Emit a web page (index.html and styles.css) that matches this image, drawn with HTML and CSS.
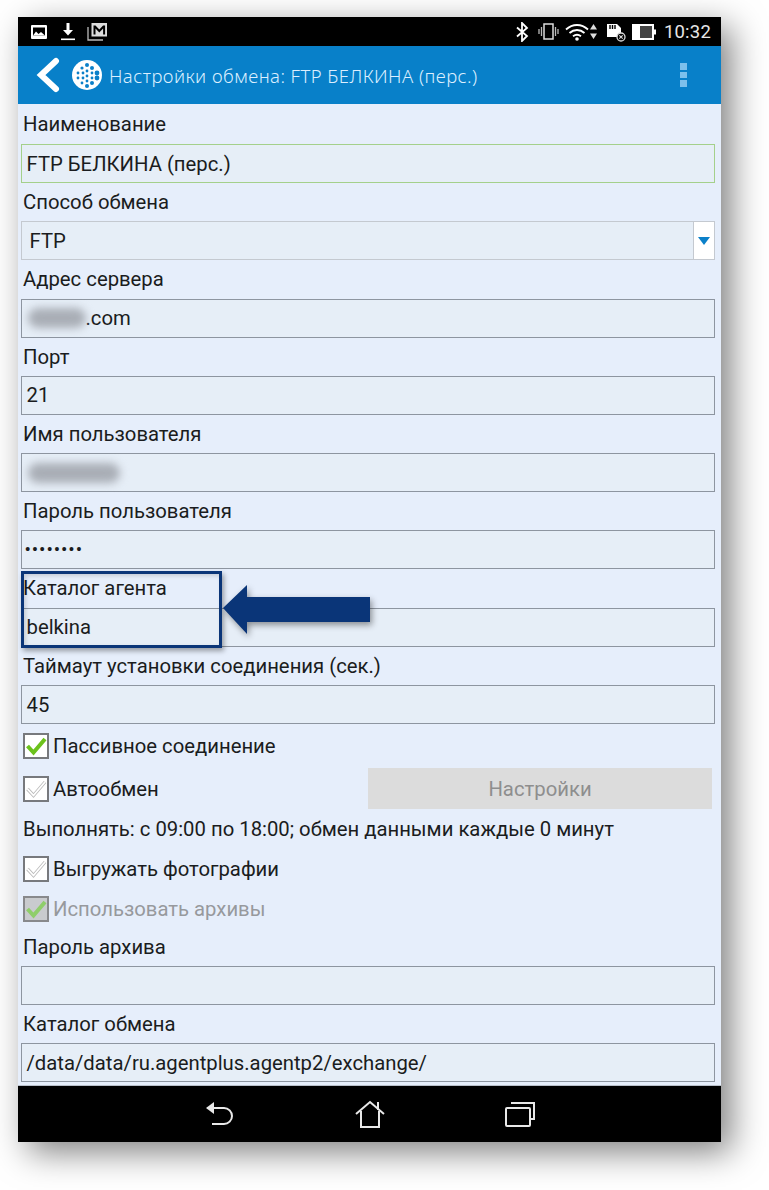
FILE: index.html
```html
<!DOCTYPE html>
<html lang="ru">
<head>
<meta charset="utf-8">
<title>Настройки обмена</title>
<link rel="stylesheet" href="styles.css">
</head>
<body>
<div class="screen">
  <div class="status">
    <div class="status-left">
      <svg class="ic" width="18" height="16" viewBox="0 0 18 16"><rect x="1" y="1" width="16" height="14" rx="1" fill="#fff"/><rect x="3" y="3.500" width="12" height="8" fill="#000"/><path d="M3 11.500 6 7.500 8.500 10 11 8l4 3.500z" fill="#fff"/></svg>
      <svg class="ic" width="14" height="19" viewBox="0 0 14 19"><path d="M5.500 1h3v7h3.500L7 13.500 2 8h3.500z" fill="#fff"/><rect y="16.500" width="14" height="1.600" fill="#fff"/></svg>
      <svg class="ic" width="21" height="19" viewBox="0 0 21 19"><path d="M1 5v13h15" fill="none" stroke="#bbb" stroke-width="1.300"/><rect x="4.500" y="1" width="15.500" height="13.500" fill="#ddd"/><path d="M6.500 12.500V3.500h2l3.800 4 3.800-4h2v9h-2V6.500l-3.800 4-3.800-4v6z" fill="#000"/></svg>
    </div>
    <div class="status-right">
      <svg class="ic bt" width="13" height="20" viewBox="0 0 13 20"><path d="M1 5.500 11 14l-5 5V1l5 5L1 14.500" fill="none" stroke="#fff" stroke-width="1.800"/></svg>
      <svg class="ic vib" width="21" height="17" viewBox="0 0 21 17"><rect x="6" y="1" width="9" height="15" fill="none" stroke="#ddd" stroke-width="1.500"/><path d="M1 6v5M3.500 4v9M17.500 4v9M20 6v5" stroke="#bbb" stroke-width="1.300"/></svg>
      <svg class="ic wifi" width="24" height="18" viewBox="0 0 24 18"><path d="M1 6.500C7.500.5 16.500.5 23 6.500M4.500 10c4.500-4 10.500-4 15 0M8 13.300c2.500-2 5.500-2 8 0" fill="none" stroke="#fff" stroke-width="1.800"/><circle cx="12" cy="16" r="1.800" fill="#fff"/></svg>
      <svg class="ic arrows" width="7" height="15" viewBox="0 0 7 15"><path d="M3.500 0 7 5.500H0zM0 9.500h7L3.500 15z" fill="#ddd"/></svg>
      <svg class="ic sd" width="20" height="20" viewBox="0 0 20 20"><path d="M1 1h10l4 4v9H1z" fill="#fff" transform="translate(0 1)"/><path d="M4 3v4M6.500 3v4M9 3v4" stroke="#000" stroke-width="1.400"/><circle cx="15" cy="15" r="4" fill="#000" stroke="#ddd" stroke-width="1.300"/><path d="m13.300 13.300 3.400 3.400m0-3.400-3.400 3.400" stroke="#ddd" stroke-width="1.100"/></svg>
      <svg class="ic batt" width="24" height="16" viewBox="0 0 24 16"><rect x="1" y="1" width="20" height="14" fill="#444" stroke="#fff" stroke-width="2"/><rect x="1" y="1" width="7" height="14" fill="#fff"/><rect x="21.500" y="5.500" width="2.500" height="5" fill="#fff"/></svg>
      <span class="clock">10:32</span>
    </div>
  </div>

  <header class="appbar">
    <svg class="back" width="24" height="36" viewBox="0 0 24 36"><path d="M20 4 5 18l15 14" fill="none" stroke="#fff" stroke-width="6" stroke-linecap="round"/></svg>
    <svg class="logo" width="30" height="30" viewBox="0 0 30 30"><circle cx="15" cy="15" r="15" fill="#fff"/><g fill="#0b80c9"><circle cx="15" cy="5" r="2"/><circle cx="10" cy="8" r="1.600"/><circle cx="20" cy="8" r="2"/><circle cx="6" cy="13" r="1.400"/><circle cx="11" cy="13" r="1.400"/><circle cx="15" cy="11" r="1.400"/><circle cx="20" cy="13" r="1.400"/><circle cx="25" cy="13" r="2.400"/><circle cx="6" cy="18" r="1.400"/><circle cx="11" cy="18" r="1.400"/><circle cx="15" cy="16" r="1.400"/><circle cx="20" cy="18" r="1.400"/><circle cx="25" cy="18" r="2.400"/><circle cx="10" cy="23" r="1.400"/><circle cx="15" cy="21" r="1.400"/><circle cx="15" cy="26" r="2"/><circle cx="20" cy="23" r="2"/></g></svg>
    <h1 class="title">Настройки обмена: FTP БЕЛКИНА (перс.)</h1>
    <div class="menu"><i></i><i></i><i></i></div>
  </header>

  <main class="form">
    <label class="lbl first">Наименование</label>
    <div class="field focus">FTP БЕЛКИНА (перс.)</div>
    <label class="lbl">Способ обмена</label>
    <div class="field select"><span class="select-val">FTP</span><span class="select-btn"><svg width="12" height="8" viewBox="0 0 12 8"><path d="M0 0h12L6 8z" fill="#0b80c9"/></svg></span></div>
    <label class="lbl">Адрес сервера</label>
    <div class="field"><span class="smudge s1"></span>.com</div>
    <label class="lbl">Порт</label>
    <div class="field">21</div>
    <label class="lbl">Имя пользователя</label>
    <div class="field"><span class="smudge s2"></span></div>
    <label class="lbl">Пароль пользователя</label>
    <div class="field dots">••••••••</div>
    <label class="lbl">Каталог агента</label>
    <div class="field">belkina</div>
    <label class="lbl">Таймаут установки соединения (сек.)</label>
    <div class="field">45</div>

    <div class="check-row r1">
      <span class="box"><svg width="22" height="22" viewBox="0 0 22 22"><path d="m2.500 11 6 6.500L20 4" fill="none" stroke="#6cc21c" stroke-width="4"/></svg></span>
      <span>Пассивное соединение</span>
    </div>
    <div class="check-row r2">
      <span class="box"><svg width="22" height="22" viewBox="0 0 22 22"><path d="m2.500 11 6 6.500L20 4" fill="none" stroke="#bbb" stroke-width="3.400"/><path d="m2.500 11 6 6.500L20 4" fill="none" stroke="#fff" stroke-width="1.800"/></svg></span>
      <span>Автообмен</span>
      <button class="btn">Настройки</button>
    </div>
    <p class="note">Выполнять: с 09:00 по 18:00; обмен данными каждые 0 минут</p>
    <div class="check-row r4">
      <span class="box"><svg width="22" height="22" viewBox="0 0 22 22"><path d="m2.500 11 6 6.500L20 4" fill="none" stroke="#bbb" stroke-width="3.400"/><path d="m2.500 11 6 6.500L20 4" fill="none" stroke="#fff" stroke-width="1.800"/></svg></span>
      <span>Выгружать фотографии</span>
    </div>
    <div class="check-row r5 off">
      <span class="box"><svg width="22" height="22" viewBox="0 0 22 22"><path d="m2.500 11 6 6.500L20 4" fill="none" stroke="#8fce6a" stroke-width="4"/></svg></span>
      <span>Использовать архивы</span>
    </div>
    <label class="lbl l-arch">Пароль архива</label>
    <div class="field"></div>
    <label class="lbl">Каталог обмена</label>
    <div class="field">/data/data/ru.agentplus.agentp2/exchange/</div>
  </main>

  <nav class="navbar">
    <svg width="30" height="28" viewBox="0 0 30 28"><path d="M2 8h17a7.500 7.500 0 0 1 0 16H7" fill="none" stroke="#e8e8e8" stroke-width="2"/><path d="M1 8l8-6v12z" fill="#e8e8e8"/></svg>
    <svg width="30" height="28" viewBox="0 0 30 28"><path d="M1 14 15 2l14 12M6 11v16h18V11M23 2v8" fill="none" stroke="#e8e8e8" stroke-width="2"/></svg>
    <svg width="30" height="26" viewBox="0 0 30 26"><rect x="1" y="7" width="24" height="18" rx="1" fill="none" stroke="#e8e8e8" stroke-width="2"/><path d="M6 2h23v16h-4" fill="none" stroke="#e8e8e8" stroke-width="2"/></svg>
  </nav>

  <div class="mark"></div>
  <svg class="arrow" width="165" height="64" viewBox="0 0 165 64"><path d="M4 27 28 4v12h123v25H28v12z" fill="#0a3578"/></svg>
</div>
</body>
</html>
```
FILE: styles.css
```css
* { box-sizing: border-box; }
html, body { margin: 0; padding: 0; background: #fff; }
body { width: 769px; height: 1190px; overflow: hidden; font-family: Roboto, "Liberation Sans", sans-serif; }

.screen {
  position: relative;
  width: 703px;
  height: 1125px;
  margin: 17px 0 0 18px;
  display: flex;
  flex-direction: column;
  background: #e6eefb;
  box-shadow: 10px 10px 32px rgba(0, 0, 0, .5);
}

.status {
  height: 29px;
  flex: none;
  background: #000;
  display: flex;
  align-items: center;
  justify-content: space-between;
  padding: 0 10px 0 12px;
}
.status-left, .status-right { display: flex; align-items: center; }
.ic { display: block; flex: none; }
.status-left .ic + .ic { margin-left: 13px; }
.status-left .ic:last-child { margin-left: 12px; }
.vib { margin-left: 9px; }
.wifi { margin-left: 6px; }
.arrows { margin-left: 1px; }
.sd { margin-left: 9px; }
.batt { margin-left: 6px; }
.clock { margin-left: 8px; color: #e6e6e6; font-size: 18.500px; letter-spacing: .2px; }

.appbar {
  height: 58px;
  flex: none;
  background: #0880c9;
  display: flex;
  align-items: center;
  padding-left: 18px;
  position: relative;
}
.back { flex: none; }
.logo { flex: none; margin-left: 12px; }
.title {
  margin: 0 0 0 7px;
  font-family: "Noto Sans", sans-serif;
  font-weight: 300;
  font-size: 18.500px;
  letter-spacing: .45px;
  color: #dcefff;
  white-space: nowrap;
}
.menu {
  margin-left: auto;
  margin-right: 34px;
  display: flex;
  flex-direction: column;
  gap: 2px;
}
.menu i { display: block; width: 7px; height: 6.500px; background: #7cc0ec; }

.form {
  flex: 1;
  min-height: 0;
  padding: 0 6px 0 2.500px;
  color: #1a1c20;
  font-size: 20.300px;
}
.lbl {
  display: flex;
  align-items: center;
  height: 38.300px;
  padding-left: 2.500px;
  line-height: 1;
}
.lbl.first { height: 40px; }
.l-arch { height: 38px; }
.field {
  height: 39px;
  display: flex;
  align-items: center;
  padding-left: 5px;
  background: #e6eef7;
  border: 1.500px solid #8d95a0;
}
.field.focus { border-color: #a4d08b; }
.field.select { border-color: #c4c9d0; padding: 0 0 0 8px; justify-content: space-between; }
.select-btn {
  width: 21px;
  height: 100%;
  background: #fff;
  border-left: 1px solid #c4c9d0;
  display: flex;
  align-items: center;
  justify-content: center;
}
.dots { font-size: 19px; letter-spacing: .9px; padding-left: 3px; }
.smudge {
  display: block;
  height: 20px;
  background: #a9aeb6;
  border-radius: 10px;
  filter: blur(4px);
}
.s1 { width: 58px; margin-left: 1px; }
.s2 { width: 92px; margin-left: 1px; }

.check-row {
  display: flex;
  align-items: center;
  padding-left: 2.500px;
  white-space: nowrap;
}
.r1 { height: 44px; }
.r2 { height: 41px; }
.r4 { height: 41px; }
.r5 { height: 39px; }
.off { color: #97999d; }
.box {
  width: 26px;
  height: 26px;
  margin-right: 4px;
  flex: none;
  background: #fff;
  border: 2px solid #77797d;
  display: flex;
  align-items: center;
  justify-content: center;
}
.off .box { background: #c9cbce; border-color: #88898c; }
.btn {
  margin-left: auto;
  margin-right: 3px;
  width: 344px;
  height: 41px;
  border: 0;
  background: #dcdcdc;
  color: #8e8e8e;
  font: inherit;
  padding: 0;
}
.note {
  margin: 0;
  height: 39px;
  display: flex;
  align-items: center;
  padding-left: 2.500px;
  white-space: nowrap;
}

.navbar {
  height: 57px;
  flex: none;
  background: #000;
  border-top: 1px solid #b9c0ca;
  display: flex;
  align-items: center;
  justify-content: center;
  gap: 120px;
  padding-left: 1px;
}

.mark {
  position: absolute;
  left: 3px;
  top: 554px;
  width: 201px;
  height: 77px;
  border: 3px solid #0a3578;
  box-shadow: 2px 3px 5px rgba(0, 0, 0, .35), inset 2px 2px 4px rgba(0, 0, 0, .15);
}
.arrow {
  position: absolute;
  left: 201px;
  top: 564px;
  filter: drop-shadow(2px 3px 3px rgba(0, 0, 0, .4));
}
```
